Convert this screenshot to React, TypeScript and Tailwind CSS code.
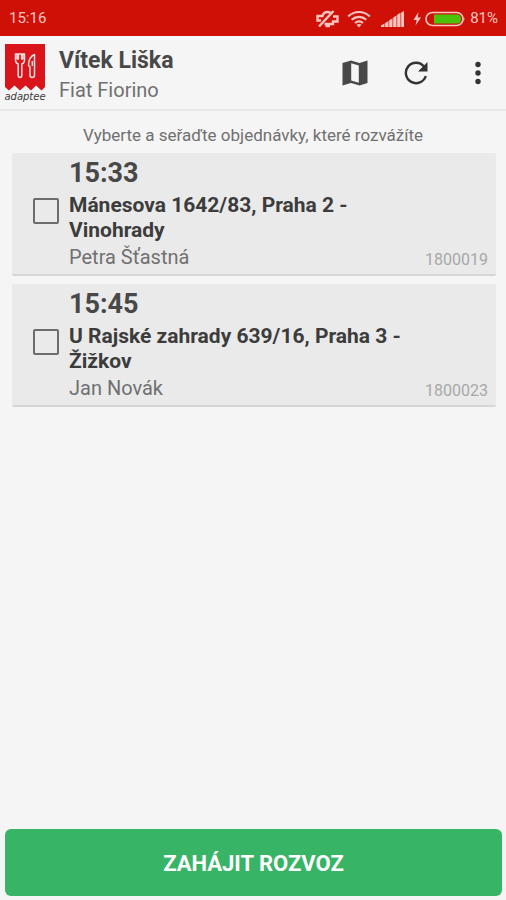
interface Order {
  id: string;
  time: string;
  address: string;
  customer: string;
}

const orders: Order[] = [
  { id: '1800019', time: '15:33', address: 'Mánesova 1642/83, Praha 2 - Vinohrady', customer: 'Petra Šťastná' },
  { id: '1800023', time: '15:45', address: 'U Rajské zahrady 639/16, Praha 3 - Žižkov', customer: 'Jan Novák' }
];

function SilentIcon() {
  return (
    <svg width="24" height="20" viewBox="0 0 24 20" fill="none" stroke="currentColor" strokeWidth="2.400">
      <path d="M15.500 4Q14.200 3 12.500 3Q8.500 3 7.500 7H2.500V11.500H6" />
      <path d="M18 7.500H22.500V12.500H18V15H9.500" />
      <path d="M18.500 2L4 17.500" />
      <path d="M10.500 17H15" />
    </svg>
  );
}

function WifiIcon() {
  return (
    <svg width="24" height="18" viewBox="0 0 24 18" fill="none" stroke="currentColor" strokeWidth="2.200">
      <path d="M1.200 6.500C7.500 0.500 16.500 0.500 22.800 6.500" />
      <path d="M4.700 9.800C9 5.900 15 5.900 19.300 9.800" />
      <path d="M8 13C10.500 10.900 13.500 10.900 16 13" />
      <path d="M9.500 14.800Q12 13.300 14.500 14.800L12 17.500Z" fill="currentColor" stroke="none" />
    </svg>
  );
}

function SignalIcon() {
  return (
    <svg width="24" height="18" viewBox="0 0 24 18" fill="currentColor">
      <path d="M0 17V15.500L3.500 13.500V17ZM4.200 17V13L7.500 11V17ZM8.200 17V10.300L11.500 8.300V17ZM12.200 17V7.500L15.500 5.500V17ZM16.200 17V4.800L19.500 2.800V17ZM20.200 17V2.500L23 1V17Z" />
    </svg>
  );
}

function BatteryIcon() {
  return (
    <svg width="53" height="16" viewBox="0 0 53 16">
      <path d="M5.500 1L0.500 9H3.700L2.500 14.500L8 6.500H4.700Z" fill="currentColor" />
      <rect x="13" y="1.500" width="37" height="13" rx="6.500" fill="none" stroke="currentColor" strokeWidth="1.600" />
      <path d="M21 3.500H44.500Q48 4 48 8Q48 12 44.500 12.500H21Z" fill="#48c30a" />
      <path d="M50.500 6Q52.500 8 50.500 10Z" fill="currentColor" />
    </svg>
  );
}

function StatusBar() {
  return (
    <div className="flex h-9 items-center justify-between bg-[#cf1006] pt-px pr-2 pl-[9px] text-[15px] text-[#fac5c0]">
      <span>15:16</span>
      <div className="flex items-center">
        <SilentIcon />
        <div className="ml-2 flex">
          <WifiIcon />
        </div>
        <div className="ml-2.5 flex">
          <SignalIcon />
        </div>
        <div className="ml-2 flex">
          <BatteryIcon />
        </div>
        <span className="ml-1">81%</span>
      </div>
    </div>
  );
}

function Logo() {
  return (
    <div className="flex w-10 flex-col items-center">
      <svg width="40" height="48" viewBox="0 0 40 48">
        <path d="M0 0H40V43L36.500 46.500L31 41.500L26 46.500L20.500 41.500L15 46.500L9.500 41.500L4 46.500L0 43Z" fill="#d9141a" />
        <g fill="#d9141a" stroke="#fbdcdc" strokeWidth="1.500" strokeLinejoin="round">
          <path d="M10.500 10V16Q10.500 19 13.200 20V31Q13.200 33.500 15 33.500Q16.800 33.500 16.800 31V20Q19.500 19 19.500 16V10L17.800 10V15H16.600V10H13.400V15H12.200V10Z" />
          <path d="M29.500 10.500Q23.500 13 23.500 21.500L25 23V31Q25 33.500 27.200 33.500Q29.500 33.500 29.500 31Z" />
          <path d="M27.300 17V22" fill="none" />
        </g>
      </svg>
      <span className="font-['DejaVu_Sans'] text-[10px] leading-[10px] text-[#3b3b3b] italic">adaptee</span>
    </div>
  );
}

function MapIcon() {
  return (
    <svg width="26" height="26" viewBox="0 0 26 26">
      <path d="M0.500 3L9 0.500L17.500 3L25.500 0.500V23L17.500 25.500L9 23L0.500 25.500Z" fill="#484848" />
      <path d="M9.200 3.200L16.800 5.500V22.700L9.200 20.400Z" fill="#f5f5f5" />
    </svg>
  );
}

function RefreshIcon() {
  return (
    <svg width="24" height="24" viewBox="0 0 24 24">
      <path d="M20 5.500A10.200 10.200 0 1 0 21.800 15" fill="none" stroke="#333333" strokeWidth="2.400" />
      <path d="M23.500 1V10.500H14Z" fill="#333333" />
    </svg>
  );
}

function MoreIcon() {
  return (
    <svg width="8" height="24" viewBox="0 0 8 24" fill="#333333">
      <circle cx="4" cy="3.500" r="2.700" />
      <circle cx="4" cy="12" r="2.700" />
      <circle cx="4" cy="20.500" r="2.700" />
    </svg>
  );
}

function Header() {
  return (
    <header className="flex h-[75px] items-center border-b-2 border-[#e9e9e9] pr-6 pl-[5px]">
      <Logo />
      <div className="ml-3.5 flex-1 pt-1">
        <h1 className="text-[23px] leading-[30px] font-bold text-[#484848]">Vítek Liška</h1>
        <p className="text-xl leading-7 text-[#707070]">Fiat Fiorino</p>
      </div>
      <div className="flex items-center">
        <button type="button" aria-label="Mapa">
          <MapIcon />
        </button>
        <button type="button" aria-label="Obnovit" className="ml-9">
          <RefreshIcon />
        </button>
        <button type="button" aria-label="Menu" className="ml-[46px]">
          <MoreIcon />
        </button>
      </div>
    </header>
  );
}

function OrderCard({ order }: { order: Order }) {
  const inputId = `order-${order.id}`;

  return (
    <li className="flex items-end rounded-xs border-b-2 border-[#d6d6d6] bg-[#eaeaea] pr-2 pb-0.5 pl-[21px]">
      <input
        id={inputId}
        type="checkbox"
        className="mr-2.5 mb-12 size-[26px] shrink-0 appearance-none rounded-xs border-2 border-[#6c6c6c] checked:bg-[#6c6c6c]"
      />
      <label htmlFor={inputId} className="flex-1">
        <span className="block text-[27px] leading-10 font-bold text-[#484848]">{order.time}</span>
        <span className="block max-w-[340px] text-[21px] leading-[25px] font-bold text-[#3c3c3c]">{order.address}</span>
        <span className="block text-xl leading-[29px] text-[#707070]">{order.customer}</span>
      </label>
      <span className="text-base leading-6 text-[#a8a8a8]">{order.id}</span>
    </li>
  );
}

export default function App() {
  return (
    <div className="flex min-h-screen flex-col bg-[#f5f5f5] font-['Roboto',sans-serif]">
      <StatusBar />
      <Header />
      <main className="flex flex-1 flex-col">
        <p className="pt-3 pb-[5px] text-center text-[17px] leading-[25px] text-[#707070]">
          Vyberte a seřaďte objednávky, které rozvážíte
        </p>
        <ul className="flex flex-col gap-2 pr-2.5 pl-3">
          {orders.map((order) => (
            <OrderCard key={order.id} order={order} />
          ))}
        </ul>
      </main>
      <footer className="px-1 pb-1 pl-[5px]">
        <button type="button" className="h-[67px] w-full rounded-md bg-[#38b466] pt-0.5 text-[22px] font-bold text-white">
          ZAHÁJIT ROZVOZ
        </button>
      </footer>
    </div>
  );
}
